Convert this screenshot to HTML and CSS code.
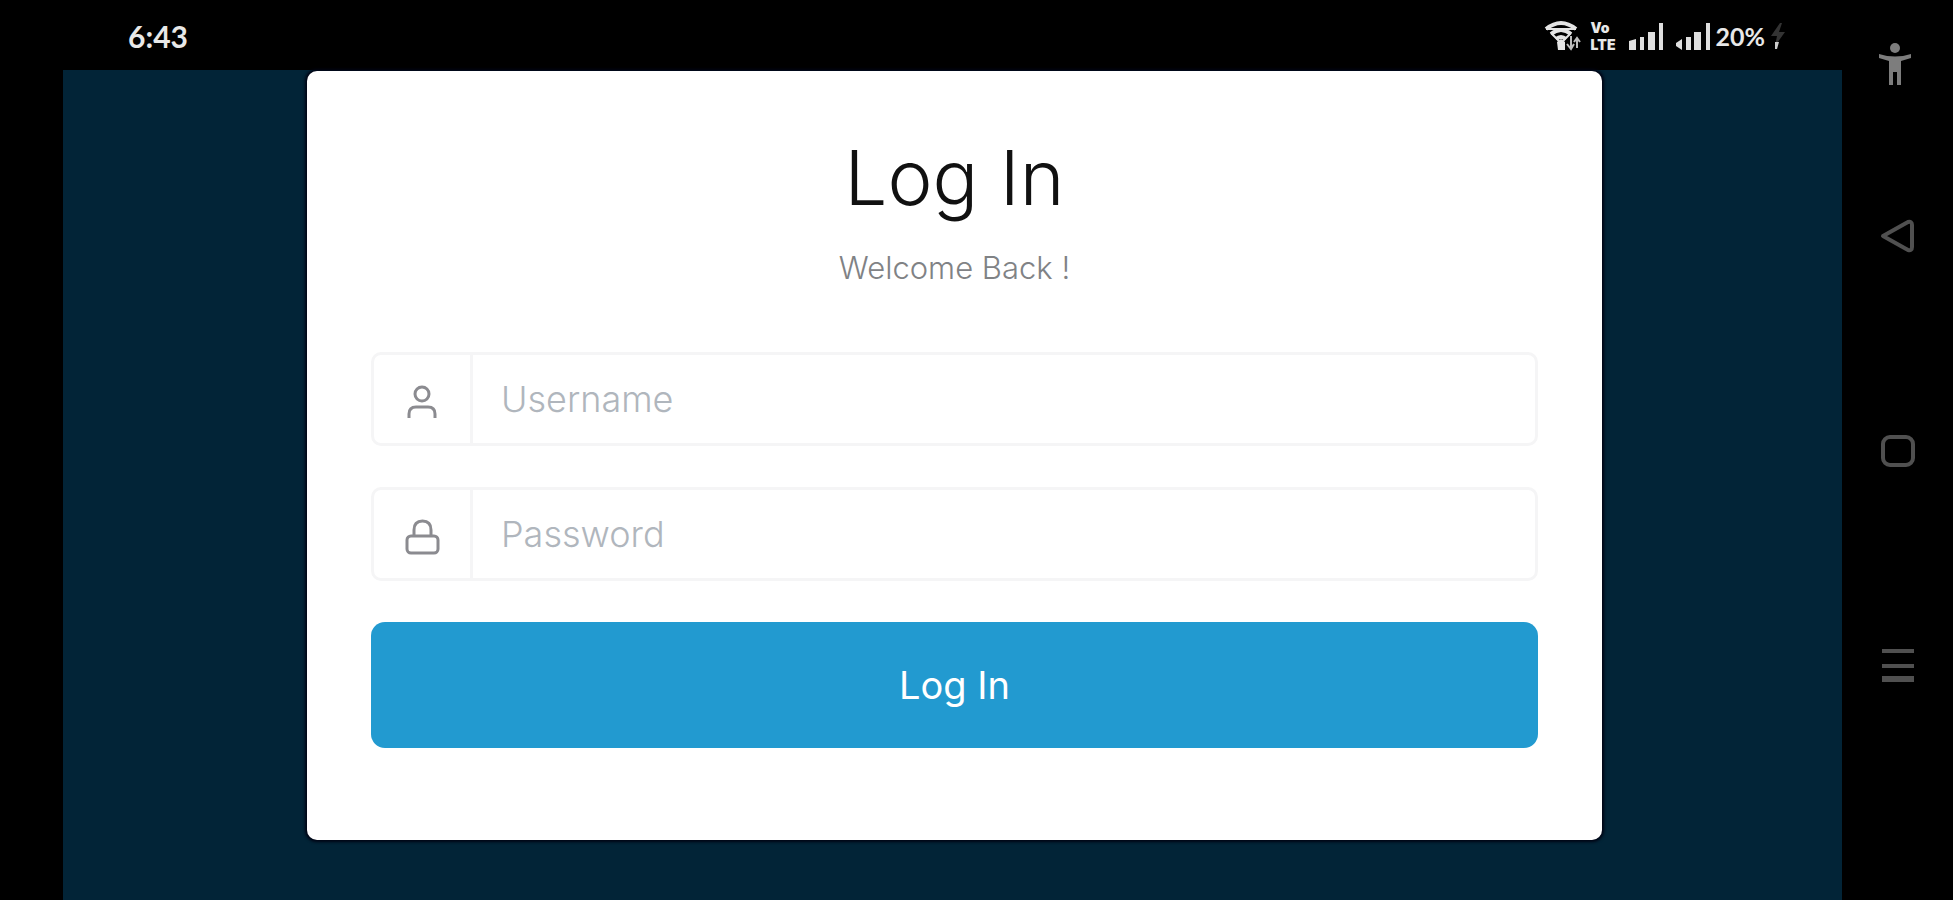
FILE: index.html
```html
<!DOCTYPE html>
<html lang="en">
<head>
<meta charset="utf-8">
<meta name="viewport" content="width=device-width, initial-scale=1">
<title>Log In</title>
<link rel="stylesheet" href="styles.css">
</head>
<body>
<div class="device">
  <div class="display">
    <header class="status">
      <time class="clock">6:43</time>
      <div class="indicators">
        <svg class="wifi" width="38" height="32" viewBox="0 0 38 32" fill="none" stroke="#e4e4e4" stroke-width="4" aria-hidden="true">
          <path d="M2 9Q17-3 32 9M7 14Q17 6 27 14M12 19q5-4 10 0"/>
          <path d="M2 9h30M7 13l10 10 10-10" stroke-width="2"/>
          <path d="M13 22l4-3 4 3v8h-7z" fill="#e4e4e4" stroke="none"/>
          <path d="M27 16v12M23 24l4 5 3-5M33 28V18M30 22l3-4 3 4" stroke="#bdbdbd" stroke-width="2"/>
        </svg>
        <span class="volte"><span>Vo</span><span>LTE</span></span>
        <svg class="signal" width="36" height="28" viewBox="0 0 36 28" fill="#dedede" aria-hidden="true"><path d="M1 19l7-2v11H1zM12 15h4v13h-4zM20 10h7v18h-7zM31 1h4v27h-4z"/></svg>
        <svg class="signal" width="36" height="28" viewBox="0 0 36 28" fill="#dedede" aria-hidden="true"><path d="M1 21l6-4v11l-6-4zM11 15h5v13h-5zM19 10h7v18h-7zM31 1h4v27h-4z"/></svg>
        <span class="battery">20%</span>
        <svg class="bolt" width="14" height="28" viewBox="0 0 14 28" aria-hidden="true"><path d="M9 1L0 14h6L4 24 14 10H8l3-9z" fill="#333"/><path d="M4 20h4l-2 7H4z" fill="#ccc"/></svg>
      </div>
    </header>
    <main class="screen">
      <form class="card">
        <h1 class="title">Log In</h1>
        <p class="subtitle">Welcome Back !</p>
        <div class="field">
          <label class="field-icon" for="username" aria-label="Username">
            <svg width="36" height="36" viewBox="0 0 36 36" fill="none" stroke="#8b8b90" stroke-width="3" aria-hidden="true"><circle cx="18" cy="10" r="7"/><path d="M5 34v-4q0-7 7-7h12q7 0 7 7v4"/></svg>
          </label>
          <input class="field-input" id="username" type="text" placeholder="Username">
        </div>
        <div class="field">
          <label class="field-icon" for="password" aria-label="Password">
            <svg width="36" height="36" viewBox="0 0 36 36" fill="none" stroke="#8b8b90" stroke-width="3" aria-hidden="true"><rect x="3" y="17" width="31" height="17" rx="4"/><path d="M10 17v-6q0-9 8.500-9t8.500 9v6"/></svg>
          </label>
          <input class="field-input" id="password" type="password" placeholder="Password">
        </div>
        <button class="submit" type="submit">Log In</button>
      </form>
    </main>
  </div>
  <nav class="keys" aria-label="System navigation">
    <button class="key key-access" type="button" aria-label="Accessibility">
      <svg width="40" height="44" viewBox="0 0 40 44" fill="#7d7d7d" aria-hidden="true"><circle cx="17" cy="6" r="5"/><path d="M1 12q16 5 32 0v4l-10 3v24h-4V30h-4v13h-4V19L1 16z"/></svg>
    </button>
    <button class="key" type="button" aria-label="Back">
      <svg width="36" height="36" viewBox="0 0 36 36" fill="none" stroke="#505050" stroke-width="4" stroke-linejoin="round" aria-hidden="true"><path d="M3 18L28 4q4-1 4 3v22q0 4-4 3z"/></svg>
    </button>
    <button class="key" type="button" aria-label="Home">
      <svg width="36" height="36" viewBox="0 0 36 36" fill="none" stroke="#505050" stroke-width="4" aria-hidden="true"><rect x="3" y="4" width="30" height="28" rx="7"/></svg>
    </button>
    <button class="key" type="button" aria-label="Recent apps">
      <svg width="36" height="36" viewBox="0 0 36 36" fill="#505050" aria-hidden="true"><path d="M2 1h32v4H2zM2 16h32v4H2zM2 28h32v6H2z"/></svg>
    </button>
  </nav>
</div>
</body>
</html>
```
FILE: styles.css
```css
* {
  box-sizing: border-box;
}

body {
  margin: 0;
  background: #000;
  font-family: Inter, "Noto Sans", sans-serif;
}

button {
  border: 0;
  cursor: pointer;
}

.device {
  display: flex;
  min-height: 100vh;
  padding-left: 63px;
}

.display {
  flex: 1;
  display: flex;
  flex-direction: column;
}

.status {
  display: flex;
  justify-content: space-between;
  align-items: center;
  height: 70px;
  padding: 2px 57px 0 65px;
  color: #e8e8e8;
  font-family: Lato, "Noto Sans", sans-serif;
}

.clock {
  font-size: 30px;
  font-weight: 700;
}

.indicators {
  display: flex;
  align-items: center;
}

.volte {
  display: flex;
  flex-direction: column;
  margin: 0 12px 0 9px;
  font-family: Inter, "Noto Sans", sans-serif;
  font-size: 14px;
  font-weight: 900;
  line-height: 17px;
}

.signal {
  margin-right: 11px;
}

.signal + .battery {
  margin-left: -6px;
}

.battery {
  margin-right: 6px;
  font-size: 25px;
  font-weight: 700;
}

.screen {
  flex: 1;
  padding: 1px 240px 59px 244px;
  background: #022437;
}

.card {
  display: flex;
  flex-direction: column;
  padding: 60px 64px 92px;
  border-radius: 10px;
  background: #fff;
  box-shadow: 0 0 3px 2px #000414;
}

.title {
  margin: 0;
  color: #111;
  font-size: 76px;
  font-weight: 300;
  line-height: 92px;
  text-align: center;
}

.subtitle {
  margin: 24px 0 63px;
  color: #808285;
  font-size: 31px;
  font-weight: 300;
  line-height: 42px;
  text-align: center;
}

.field {
  display: flex;
  height: 94px;
  margin-bottom: 41px;
  border: 3px solid #f5f5f6;
  border-radius: 10px;
}

.field-icon {
  display: flex;
  align-items: center;
  justify-content: center;
  width: 99px;
  padding-top: 6px;
  border-right: 3px solid #f5f5f6;
}

.field-input {
  flex: 1;
  min-width: 0;
  padding: 0 28px;
  border: 0;
  background: none;
  color: #444;
  font-family: inherit;
  font-size: 36px;
  font-weight: 300;
}

.field-input::placeholder {
  color: #b0b6bd;
  opacity: 1;
}

.submit {
  height: 126px;
  border-radius: 14px;
  background: #229ad0;
  color: #fff;
  font-family: inherit;
  font-size: 38px;
}

.keys {
  display: flex;
  flex-direction: column;
  align-items: center;
  gap: 167px;
  width: 111px;
  padding-top: 40px;
}

.key {
  display: flex;
  align-items: center;
  justify-content: center;
  width: 48px;
  height: 48px;
  padding: 0;
  background: none;
}

.key-access {
  margin-bottom: -43px;
}
```
